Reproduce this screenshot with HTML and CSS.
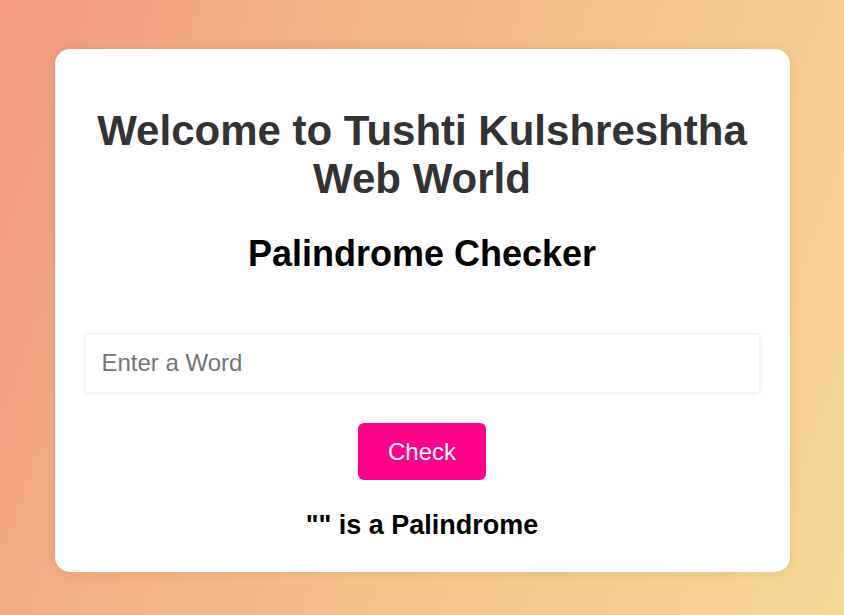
FILE: index.html
```html
<!DOCTYPE html>
<html lang="en">
<head>
<meta charset="utf-8">
<title>Palindrome Checker</title>
<link rel="stylesheet" href="styles.css">
</head>
<body>
<main class="card">
  <h1 class="title">Welcome to Tushti Kulshreshtha Web World</h1>
  <h2 class="subtitle">Palindrome Checker</h2>
  <input class="word-input" type="text" placeholder="Enter a Word">
  <button class="check-btn" type="button">Check</button>
  <p class="result">"" is a Palindrome</p>
</main>
</body>
</html>
```

FILE: styles.css
```css
html, body {
  margin: 0;
  height: 100%;
}

body {
  font-family: "Liberation Sans", Arial, sans-serif;
  background: linear-gradient(110deg, #f29a7f 0%, #f4bf8a 50%, #f6d895 100%);
  padding-top: 49px;
  box-sizing: border-box;
}

.card {
  width: 735px;
  margin: 0 auto;
  box-sizing: border-box;
  background: #fff;
  border-radius: 15px;
  box-shadow: 0 0 12px rgba(0, 0, 0, 0.08);
  padding: 30px 31px 31px;
  display: flex;
  flex-direction: column;
  align-items: center;
  text-align: center;
}

.title {
  font-size: 42px;
  font-weight: bold;
  color: #333;
  margin: 28px 0 29px;
  line-height: 1.149;
}

.subtitle {
  font-size: 36px;
  font-weight: bold;
  color: #000;
  margin: 0 0 61px;
  line-height: 1.149;
}

.word-input {
  width: 100%;
  box-sizing: border-box;
  font-family: inherit;
  font-size: 24px;
  line-height: 27px;
  height: 57px;
  padding: 15px 16px;
  border: none;
  outline: none;
  background: #fff;
  box-shadow: 0 0 6px rgba(0, 0, 0, 0.12);
  color: #333;
}

.word-input::placeholder {
  color: #757575;
}

.check-btn {
  margin-top: 31px;
  font-family: inherit;
  font-size: 24px;
  line-height: 27px;
  padding: 15px 30px;
  border: none;
  border-radius: 6px;
  background: #ff0088;
  color: #fff;
  cursor: pointer;
}

.result {
  margin: 30px 0 0;
  font-size: 27px;
  font-weight: bold;
  color: #000;
  line-height: 1.149;
}
```
